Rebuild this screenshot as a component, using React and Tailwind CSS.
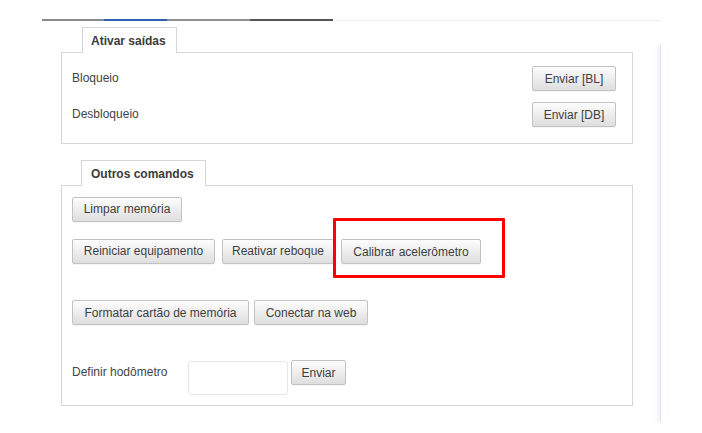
const btn =
  "h-[25px] px-[8px] border border-[#c2c2c2] rounded-[2px] bg-gradient-to-b from-[#fdfdfd] to-[#dedede] text-[12px] text-[#3f3f3f] leading-none whitespace-nowrap shadow-[0_1px_0_rgba(0,0,0,0.04)]";

function Tab({ label, className }) {
  return (
    <div
      className={`relative z-10 -mb-px h-[26px] bg-white border border-b-0 border-[#d6d6d6] flex items-center text-[12px] font-bold text-[#3b3b3b] ${className}`}
    >
      {label}
    </div>
  );
}

export default function App() {
  return (
    <div
      className="w-[702px] h-[433px] bg-white overflow-hidden pt-[19px] pl-[42px]"
      style={{ fontFamily: '"Liberation Sans", Arial, sans-serif' }}
    >
      {/* top tab strip */}
      <div className="flex items-center w-[619px]">
        <div className="w-[62px] h-[2px] bg-[#8a8a8a]" />
        <div className="w-[63px] h-[2px] bg-[#2d5fb0]" />
        <div className="w-[83px] h-[2px] bg-[#8f8f8f]" />
        <div className="w-[83px] h-[2px] bg-[#555555]" />
        <div className="flex-1 h-px bg-[#efefef]" />
      </div>

      <div className="flex">
        <div className="w-[618px] pl-[19px] pt-[6px]">
          {/* Ativar saídas */}
          <div className="w-[572px]">
            <Tab label="Ativar saídas" className="ml-[21px] w-[95px] pl-[8px]" />
            <div className="border border-[#d6d6d6] h-[92px] pl-[10px] pr-[16px] pt-[13px]">
              <div className="flex items-center justify-between">
                <span className="text-[12px] text-[#444] -mt-[2px]">Bloqueio</span>
                <button className={`${btn} h-[24px] w-[84px] px-0`}>Enviar [BL]</button>
              </div>
              <div className="flex items-center justify-between mt-[11px]">
                <span className="text-[12px] text-[#444] -mt-[2px]">Desbloqueio</span>
                <button className={`${btn} w-[84px] px-0`}>Enviar [DB]</button>
              </div>
            </div>
          </div>

          {/* Outros comandos */}
          <div className="w-[572px] mt-[16px]">
            <Tab label="Outros comandos" className="ml-[20px] w-[125px] pl-[9px]" />
            <div className="border border-[#d6d6d6] h-[221px] pl-[10px] pt-[10px]">
              <button className={`${btn} w-[110px] px-0`}>Limpar memória</button>

              <div className="flex mt-[17px]">
                <button className={`${btn} w-[143px] px-0`}>Reiniciar equipamento</button>
                <button className={`${btn} w-[112px] px-0 ml-[7px]`}>Reativar reboque</button>
                <div className="relative ml-[7px]">
                  <button className={`${btn} w-[140px] px-0`}>Calibrar acelerômetro</button>
                  <div className="absolute -left-[8px] -top-[21px] w-[172px] h-[60px] border-[3px] border-[#ff0000] rounded-[1px] pointer-events-none" />
                </div>
              </div>

              <div className="flex mt-[36px]">
                <button className={`${btn} h-[24px] w-[177px] px-0`}>Formatar cartão de memória</button>
                <button className={`${btn} h-[24px] w-[114px] px-0 ml-[5px]`}>Conectar na web</button>
              </div>

              <div className="flex items-start mt-[36px]">
                <span className="text-[12px] text-[#444] w-[116px] mt-[2px]">Definir hodômetro</span>
                <input className="w-[100px] h-[34px] border border-[#e6e6e6] rounded-[3px] outline-none" />
                <button className={`${btn} w-[55px] px-0 ml-[3px] -mt-px`}>Enviar</button>
              </div>
            </div>
          </div>
        </div>

        {/* right panel edge */}
        <div className="mt-[24px] h-[377px] w-[6px] border-l border-[#dfe3ea] shadow-[-2px_0_4px_rgba(180,190,215,0.25)]" />
      </div>
    </div>
  );
}
